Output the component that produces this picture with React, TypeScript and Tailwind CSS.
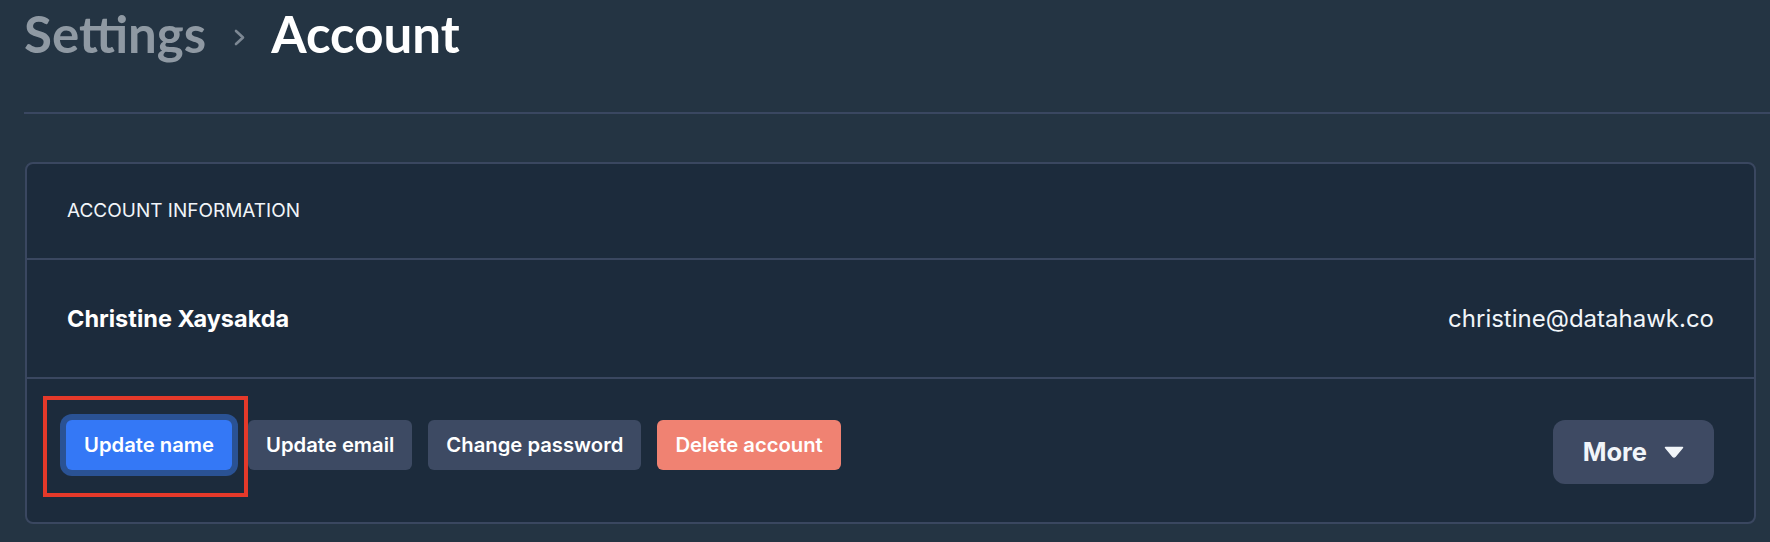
import { useState } from "react"

function Chevron() {
  return (
    <svg width="13" height="17" viewBox="0 0 13 17" className="mt-[6px] mr-[25px] ml-[27px]">
      <polyline points="3,2 10,8.5 3,15" fill="none" stroke="#7d8894" strokeWidth="2.6" strokeLinecap="round" strokeLinejoin="round" />
    </svg>
  )
}

function Caret() {
  return (
    <svg width="20" height="12" viewBox="0 0 20 12">
      <path d="M1.5 1.5 H18.5 L11 10.5 Q10 11.6 9 10.5 Z" fill="#f1f5f9" stroke="#f1f5f9" strokeWidth="1.5" strokeLinejoin="round" />
    </svg>
  )
}

export default function App() {
  const [name] = useState("Christine Xaysakda")
  const [email] = useState("christine@datahawk.co")

  return (
    <div className="min-h-screen bg-[#243443] pl-6 font-['Inter',sans-serif] text-white">
      {/* Breadcrumb */}
      <div className="flex items-center pt-[4px] font-['Lato',sans-serif] text-[51px] font-bold leading-[60px]">
        <span className="text-[#8f99a3]">Settings</span>
        <Chevron />
        <span className="text-white">Account</span>
      </div>

      <div className="mt-[48px] h-[2px] bg-[#3a4761]" />

      {/* Card */}
      <div className="mt-[48px] mr-[14px] ml-[1px] rounded-[8px] border-2 border-[#3a4760] bg-[#1c2b3c]">
        <div className="flex h-[96px] items-center border-b-2 border-[#3a4760] px-[40px]">
          <span className="text-[19px] uppercase text-[#f1f5f9]">Account information</span>
        </div>

        <div className="flex h-[119px] items-center justify-between border-b-2 border-[#3a4760] px-[40px]">
          <span className="text-[23.5px] font-bold">{name}</span>
          <span className="text-[24px] text-[#f1f5f9]">{email}</span>
        </div>

        <div className="flex h-[143px] items-start justify-between px-[39px] pt-[41px]">
          <div className="flex gap-4">
            <div className="relative">
              <button className="h-[50px] rounded-[6px] bg-[#3478f6] px-[18px] text-[20.25px] font-semibold ring-[6px] ring-[#2a5294]">
                Update name
              </button>
              <div className="pointer-events-none absolute top-[-24px] left-[-23px] h-[101px] w-[205px] border-4 border-[#e5392a]" />
            </div>
            <button className="h-[50px] rounded-[6px] bg-[#3d4a63] px-[18px] text-[20.25px] font-semibold">
              Update email
            </button>
            <button className="h-[50px] rounded-[6px] bg-[#3d4a63] px-[18px] text-[20.25px] font-semibold">
              Change password
            </button>
            <button className="h-[50px] rounded-[6px] bg-[#f08272] px-[18px] text-[20.25px] font-semibold">
              Delete account
            </button>
          </div>

          <button className="mr-[1px] flex h-[64px] items-center gap-[17px] rounded-[12px] bg-[#3e4a63] px-[30px] text-[25.5px] font-bold text-[#f1f5f9]">
            More
            <Caret />
          </button>
        </div>
      </div>
    </div>
  )
}
